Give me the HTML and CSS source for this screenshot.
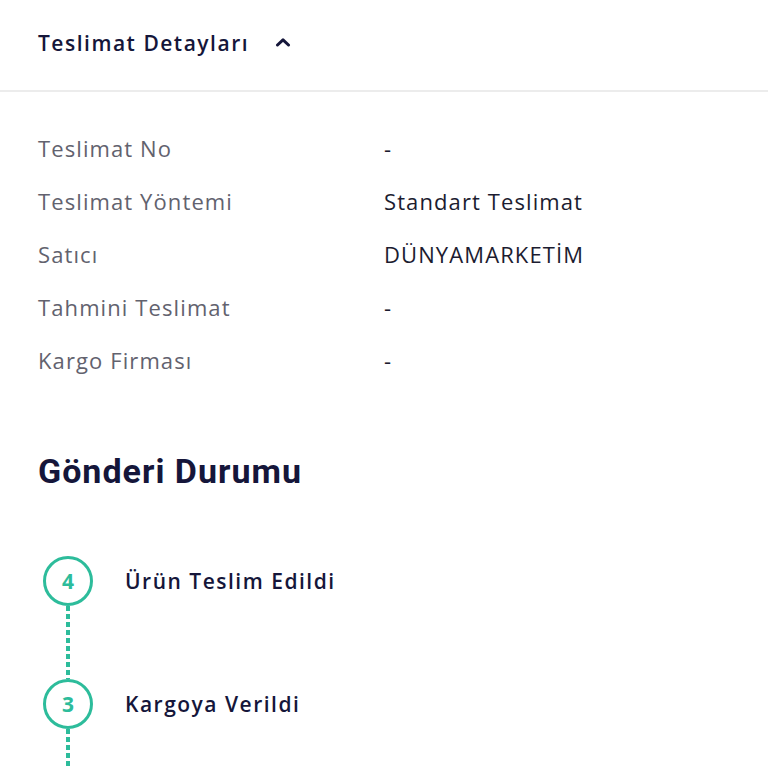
FILE: index.html
```html
<!DOCTYPE html>
<html lang="tr">
<head>
    <meta charset="UTF-8">
    <meta name="viewport" content="width=device-width, initial-scale=1.0">
    <title>Teslimat Detayları</title>
    <link rel="stylesheet" href="styles.css">
</head>
<body>

    <!-- Accordion Header -->
    <div class="acc-header">
        <span class="acc-title">Teslimat Detayları</span>
        <svg class="chevron" width="16" height="10" viewBox="0 0 16 10">
            <path d="M2.5 8 L8 2.8 L13.5 8" fill="none" stroke="#15163a" stroke-width="3" stroke-linecap="round" stroke-linejoin="round"/>
        </svg>
    </div>

    <!-- Delivery Info -->
    <div class="details">
        <div class="row"><span class="label">Teslimat No</span><span class="value">-</span></div>
        <div class="row"><span class="label">Teslimat Yöntemi</span><span class="value">Standart Teslimat</span></div>
        <div class="row"><span class="label">Satıcı</span><span class="value">DÜNYAMARKETİM</span></div>
        <div class="row"><span class="label">Tahmini Teslimat</span><span class="value">-</span></div>
        <div class="row"><span class="label">Kargo Firması</span><span class="value">-</span></div>
    </div>

    <!-- Shipment Status -->
    <div class="status">
        <h2>Gönderi Durumu</h2>

        <div class="steps">
            <div class="step">
                <div class="marker">
                    <div class="circle">4</div>
                    <div class="line"></div>
                </div>
                <div class="step-text">Ürün Teslim Edildi</div>
            </div>
            <div class="step">
                <div class="marker">
                    <div class="circle">3</div>
                    <div class="line"></div>
                </div>
                <div class="step-text">Kargoya Verildi</div>
            </div>
        </div>
    </div>

</body>
</html>
```

FILE: styles.css
```css
* {
    margin: 0;
    padding: 0;
    box-sizing: border-box;
}

body {
    background: #fff;
    font-family: "Open Sans", sans-serif;
    color: #17173a;
    overflow: hidden;
}

/* Header */
.acc-header {
    height: 92px;
    padding-left: 38px;
    display: flex;
    align-items: center;
    gap: 26px;
    border-bottom: 2px solid #ececec;
}

.acc-title {
    font-size: 21px;
    font-weight: 600;
    letter-spacing: 1.5px;
    color: #15163a;
    margin-top: -4px;
}

.chevron {
    margin-top: -6px;
}

/* Details */
.details {
    padding: 29px 38px 0;
}

.row {
    display: flex;
    height: 53px;
    align-items: center;
    font-size: 22px;
    letter-spacing: 1.1px;
}

.label {
    width: 346px;
    color: #62626e;
}

.value {
    color: #1c1c30;
}

/* Status */
.status {
    padding: 65px 38px 0;
}

.status h2 {
    font-family: Roboto, sans-serif;
    font-size: 34px;
    font-weight: 700;
    line-height: 40px;
    letter-spacing: 1px;
    color: #15163a;
}

.steps {
    margin-top: 65px;
    margin-left: 5px;
}

.step {
    display: flex;
    gap: 32px;
}

.marker {
    display: flex;
    flex-direction: column;
    align-items: center;
    width: 50px;
}

.circle {
    width: 50px;
    height: 50px;
    border: 3px solid #2dbc9b;
    border-radius: 50%;
    display: flex;
    align-items: center;
    justify-content: center;
    font-size: 21px;
    font-weight: 700;
    color: #2dbc9b;
}

.line {
    width: 4px;
    height: 73px;
    background: repeating-linear-gradient(to bottom, #2dbc9b 0 5px, transparent 5px 8px);
}

.step-text {
    height: 50px;
    display: flex;
    align-items: center;
    font-size: 21px;
    font-weight: 600;
    letter-spacing: 1.5px;
    color: #15163a;
}
```
